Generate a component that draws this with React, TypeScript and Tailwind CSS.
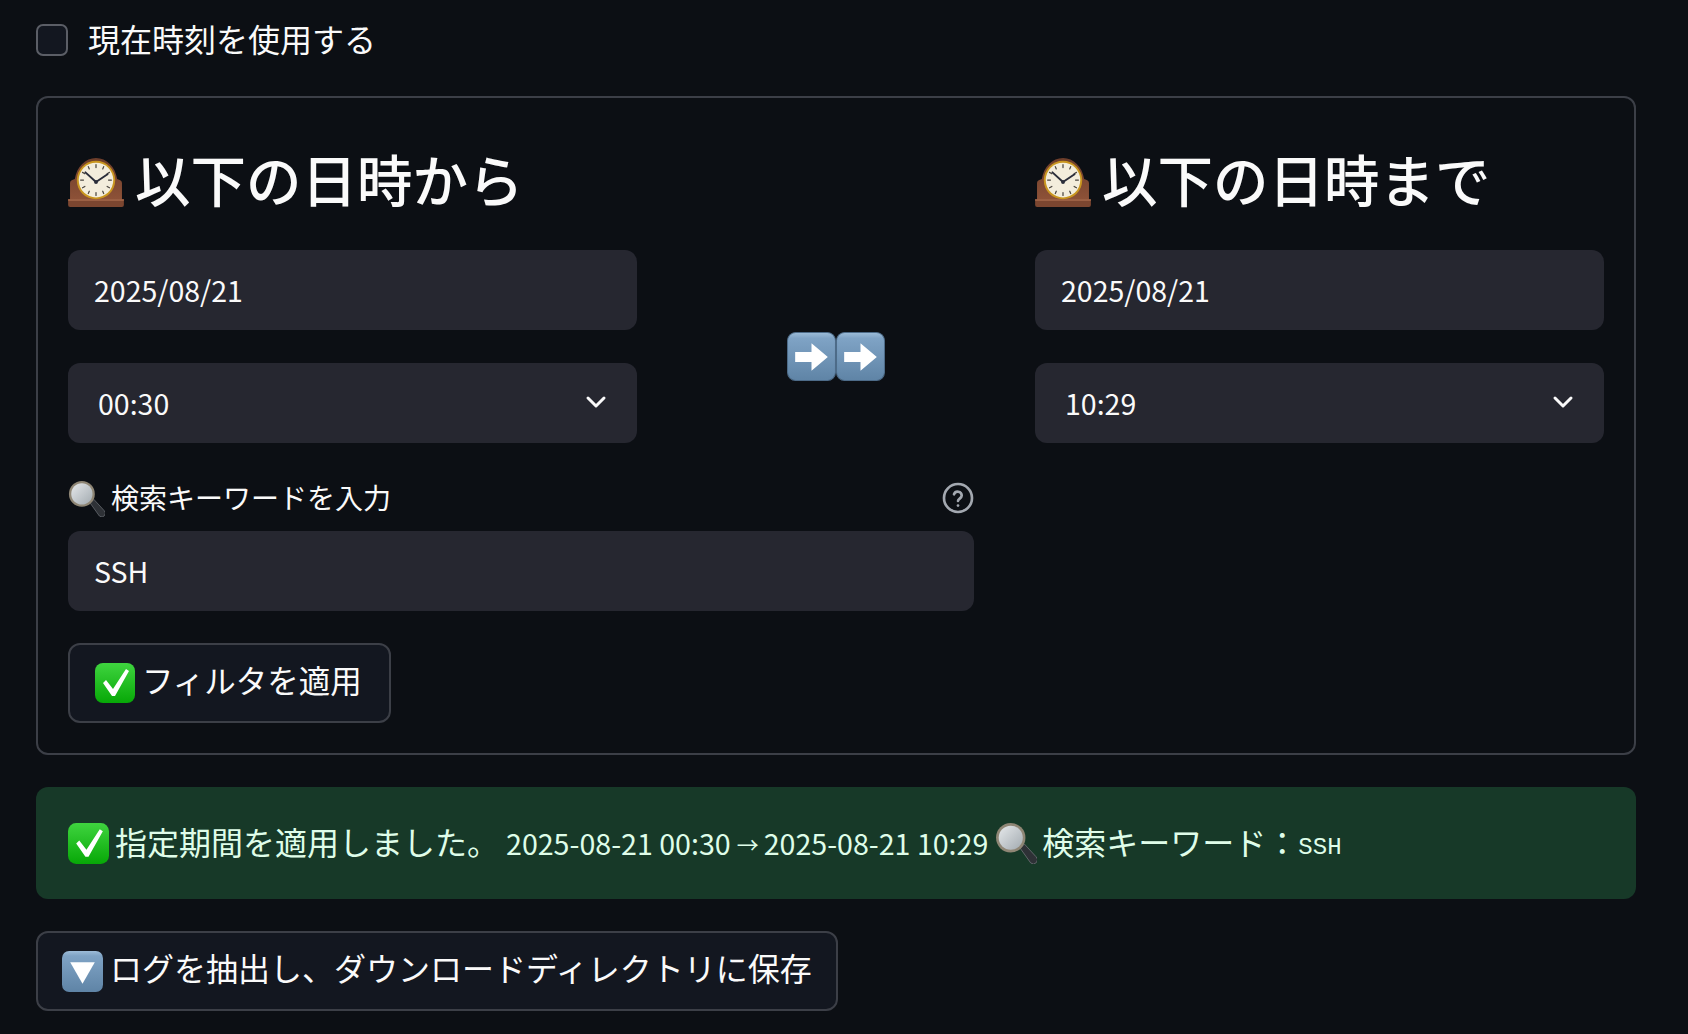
import { useId } from "react";

const font = "font-['Noto_Sans_CJK_JP','Noto_Sans',sans-serif]";

function MantelClock({ className }: { className: string }) {
  const id = useId();
  return (
    <svg viewBox="0 0 60 52" className={className}>
      <defs>
        <linearGradient id={id} x1="0" y1="0" x2="0" y2="1">
          <stop offset="0" stopColor="#6d3d2a" />
          <stop offset="1" stopColor="#8e5238" />
        </linearGradient>
      </defs>
      <path d="M3 27c0-2 2-3 5-4C10 10 19 1 30 1s20 9 22 22c3 1 5 2 5 4v18H3z" fill={`url(#${id})`} />
      <path d="M1 44h58v6a2 2 0 0 1-2 2H3a2 2 0 0 1-2-2z" fill="#7c4630" />
      <rect x="1" y="44" width="58" height="1.5" fill="#a66a4b" />
      <circle cx="30" cy="24" r="20" fill="#c9961f" />
      <circle cx="30" cy="24" r="18" fill="#f3eddc" />
      <g stroke="#4b4640" strokeWidth="1.3" strokeLinecap="round">
        <path d="M30 8v3M30 37v3M14 24h3M43 24h3M22 10l1 2.4M38 10l-1 2.4M22 38l1-2.4M38 38l-1-2.4M16 16l2.4 1.4M44 16l-2.4 1.4M16 32l2.4-1.4M44 32l-2.4-1.4" />
      </g>
      <path d="M30 26 19 16M30 26l12-8" stroke="#2a2d3a" strokeWidth="2" strokeLinecap="round" fill="none" />
      <circle cx="30" cy="26" r="2" fill="#2a2d3a" />
    </svg>
  );
}

function ArrowKey() {
  const id = useId();
  return (
    <svg viewBox="0 0 48 48" className="w-[49px] h-[49px]">
      <defs>
        <linearGradient id={id} x1="0" y1="0" x2="0" y2="1">
          <stop offset="0" stopColor="#9dbcd8" />
          <stop offset="0.12" stopColor="#7fa3c5" />
          <stop offset="1" stopColor="#5f84a6" />
        </linearGradient>
      </defs>
      <rect x="0.5" y="0.5" width="47" height="47" rx="8" fill={`url(#${id})`} stroke="#4d6b88" />
      <path d="M8 19.500h16V11l16 13.500L24 38v-8.500H8z" fill="#fff" />
    </svg>
  );
}

function CheckEmoji({ className }: { className: string }) {
  const id = useId();
  return (
    <svg viewBox="0 0 40 40" className={className}>
      <defs>
        <linearGradient id={id} x1="0" y1="0" x2="0" y2="1">
          <stop offset="0" stopColor="#3fd43f" />
          <stop offset="1" stopColor="#07a807" />
        </linearGradient>
      </defs>
      <rect width="40" height="40" rx="8" fill={`url(#${id})`} />
      <path d="M8 20l3-3 7 9L31 6l3 2-14 25h-3z" fill="#fff" />
    </svg>
  );
}

function Magnifier({ className }: { className: string }) {
  const id = useId();
  return (
    <svg viewBox="0 0 40 40" className={className}>
      <defs>
        <linearGradient id={id} x1="0" y1="0" x2="1" y2="1">
          <stop offset="0" stopColor="#e6e9eb" />
          <stop offset="1" stopColor="#a2aab0" />
        </linearGradient>
      </defs>
      <path d="M24 25l4-4 11 12a3 3 0 0 1-5 6z" fill="#2e3136" stroke="#6b6f74" strokeWidth="0.8" />
      <circle cx="15" cy="15" r="14" fill="#8f8675" />
      <circle cx="15" cy="15" r="11.500" fill={`url(#${id})`} />
    </svg>
  );
}

function DownKey({ className }: { className: string }) {
  const id = useId();
  return (
    <svg viewBox="0 0 40 40" className={className}>
      <defs>
        <linearGradient id={id} x1="0" y1="0" x2="0" y2="1">
          <stop offset="0" stopColor="#9dbcd8" />
          <stop offset="0.12" stopColor="#7fa3c5" />
          <stop offset="1" stopColor="#5f84a6" />
        </linearGradient>
      </defs>
      <rect width="40" height="40" rx="7" fill={`url(#${id})`} />
      <path d="M8 11h24L20 32z" fill="#fff" />
    </svg>
  );
}

function Heading({ text }: { text: string }) {
  return (
    <div className="h-[88px] flex items-center -ml-[2px]">
      <MantelClock className="mt-[8px] w-[60px] h-[50px] shrink-0" />
      <span className="ml-[9px] pt-[2px] text-[55.500px] leading-none font-medium text-[#fafafa] whitespace-nowrap">{text}</span>
    </div>
  );
}

function Field({ value }: { value: string }) {
  return (
    <div className="h-[80px] rounded-xl bg-[#262730] flex items-center pl-[26px] text-[28.500px] text-[#fafafa]">
      {value}
    </div>
  );
}

function TimeSelect({ value }: { value: string }) {
  return (
    <div className="h-[80px] rounded-xl bg-[#262730] flex items-center justify-between pl-[30px] pr-[29px] text-[28.500px] text-[#fafafa]">
      <span>{value}</span>
      <svg viewBox="0 0 24 24" className="w-[24px] h-[24px] -mt-[2px]" fill="none" stroke="#fafafa" strokeWidth="3" strokeLinecap="round" strokeLinejoin="round">
        <path d="M4 8l8 8 8-8" />
      </svg>
    </div>
  );
}

function Range({ title, date, time }: { title: string; date: string; time: string }) {
  return (
    <div className="w-[569px] shrink-0">
      <Heading text={title} />
      <div className="mt-[28px]">
        <Field value={date} />
      </div>
      <div className="mt-[33px]">
        <TimeSelect value={time} />
      </div>
    </div>
  );
}

export default function App() {
  return (
    <div lang="ja" className={`${font} min-h-[1034px] bg-[#0c0f14] pl-[36px] pr-[52px] pt-[24px]`}>
      <label className="flex items-center h-[31px]">
        <span className="w-[32px] h-[32px] rounded-[7px] border-2 border-[#5b5e66] bg-[#131720]" />
        <span className="ml-[20px] pb-[4px] text-[32px] leading-none text-[#fafafa]">現在時刻を使用する</span>
      </label>

      <section className="mt-[41px] h-[659px] rounded-xl border-2 border-[#3c3f47] pl-[30px] pr-[29px] pt-[36px]">
        <div className="flex">
          <div className="w-[906px] shrink-0">
            <div className="flex">
              <Range title="以下の日時から" date="2025/08/21" time="00:30" />
              <div className="ml-[150px] mt-[198px] flex h-[49px]">
                <ArrowKey />
                <ArrowKey />
              </div>
            </div>

            <div className="mt-[35px] flex items-center justify-between h-[40px]">
              <div className="flex items-center">
                <Magnifier className="w-[37px] h-[37px]" />
                <span className="ml-[6px] pb-[2px] text-[28px] leading-none text-[#fafafa]">検索キーワードを入力</span>
              </div>
              <svg viewBox="0 0 24 24" className="w-[32px] h-[32px]" fill="none" stroke="#a3a8b0" strokeWidth="2" strokeLinecap="round">
                <circle cx="12" cy="12" r="10.500" />
                <path d="M9 9.200a3 3 0 0 1 5.800 1c0 2-2.800 2.400-2.800 4" />
                <path d="M12 17.600v.1" />
              </svg>
            </div>
            <div className="mt-[13px]">
              <Field value="SSH" />
            </div>
            <button className="mt-[32px] h-[80px] w-[323px] rounded-xl border-2 border-[#3c3f47] bg-[#131720] flex items-center pl-[25px]">
              <CheckEmoji className="w-[40px] h-[40px] shrink-0" />
              <span className="ml-[7px] pb-[6px] text-[31.500px] leading-none text-[#fafafa] whitespace-nowrap">フィルタを適用</span>
            </button>
          </div>
          <div className="ml-[61px]">
            <Range title="以下の日時まで" date="2025/08/21" time="10:29" />
          </div>
        </div>
      </section>

      <div className="mt-[32px] h-[112px] rounded-xl bg-[#173928] flex items-center pl-[32px] text-[#dffde9] whitespace-nowrap">
        <CheckEmoji className="w-[41px] h-[41px] shrink-0" />
        <span className="ml-[6px] pb-[5px] text-[32px] leading-none">指定期間を適用しました。</span>
        <span className="ml-[7px] text-[28.600px] leading-none">2025-08-21 00:30</span>
        <span className="ml-[6px] mr-[5px] text-[22px] leading-none">→</span>
        <span className="text-[28.600px] leading-none">2025-08-21 10:29</span>
        <Magnifier className="ml-[7px] w-[42px] h-[42px] shrink-0" />
        <span className="ml-[5px] pb-[5px] text-[32px] leading-none">検索キーワード：</span>
        <span className="pt-[10px] text-[24px] leading-none font-['Liberation_Mono',monospace]">SSH</span>
      </div>

      <button className="mt-[32px] h-[80px] w-[802px] rounded-xl border-2 border-[#3c3f47] bg-[#131720] flex items-center pl-[24px]">
        <DownKey className="w-[41px] h-[41px] shrink-0" />
        <span className="ml-[7px] pb-[9px] text-[32px] leading-none text-[#fafafa] whitespace-nowrap">ログを抽出し、ダウンロードディレクトリに保存</span>
      </button>
    </div>
  );
}
